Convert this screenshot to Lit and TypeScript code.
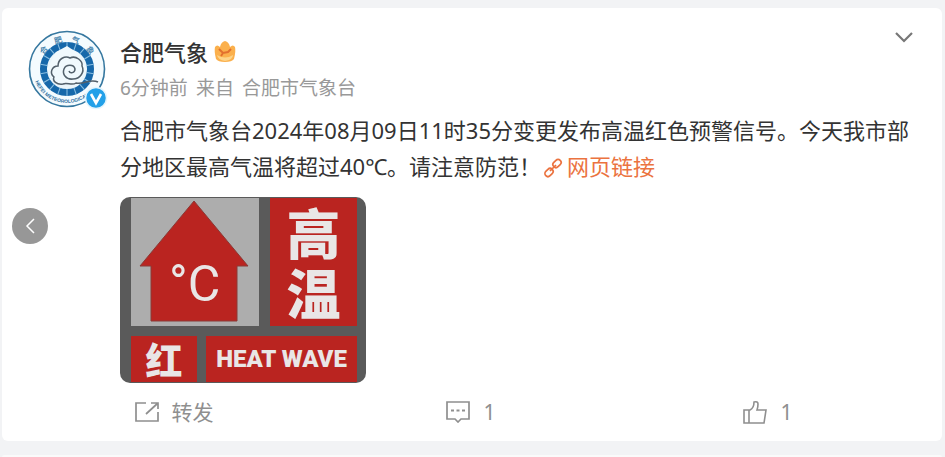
import { LitElement, html, css, svg } from "lit";
import { customElement } from "lit/decorators.js";

const tick = (i: number) => svg`<line x1="39" y1="12" x2="39" y2="19" transform="rotate(${i * 20} 39 39)" />`;

@customElement("warning-sign")
class WarningSign extends LitElement {
  static styles = css`
    :host { display: block; }
    .sign {
      display: grid;
      gap: 10px;
      width: 226px;
      padding: 1px 9px 1px 11px;
      border-radius: 10px;
      overflow: hidden;
      background: #5a5a5a;
      color: #e9e6e6;
      font-family: "Noto Sans CJK SC", sans-serif;
      font-weight: 900;
    }
    .row { display: grid; }
    .top { grid-template-columns: 128px minmax(0, 1fr); gap: 11px; height: 128px; }
    .bottom { grid-template-columns: 66px minmax(0, 1fr); gap: 9px; height: 46px; }
    .arrow { background: #adadad; }
    .arrow svg { display: block; }
    .unit { font-family: Roboto, sans-serif; font-size: 50px; font-weight: 400; fill: #e9e6e6; }
    .red { display: flex; align-items: center; justify-content: center; background: #ba2420; }
    .heat { flex-direction: column; font-size: 54px; line-height: 60px; }
    .level { font-size: 37px; line-height: 46px; }
    .english { font-family: Roboto, sans-serif; font-weight: 900; font-size: 24px; line-height: 46px; white-space: nowrap; }
  `;
  render() {
    return html`
      <div class="sign">
        <div class="row top">
          <div class="arrow">
            <svg width="128" height="128" viewBox="0 0 128 128">
              <path d="M63 3 L117 68 H106 V123 H20 V68 H9 Z" fill="#ba2420" stroke="#8a3a36" />
              <text class="unit" x="38" y="103">°C</text>
            </svg>
          </div>
          <div class="red heat"><span>高</span><span>温</span></div>
        </div>
        <div class="row bottom">
          <div class="red level">红</div>
          <div class="red english">HEAT WAVE</div>
        </div>
      </div>
    `;
  }
}

@customElement("app-root")
class AppRoot extends LitElement {
  static styles = css`
    :host {
      display: flex;
      flex-direction: column;
      gap: 14px;
      box-sizing: border-box;
      min-height: 100vh;
      padding: 8px 3px 0 2px;
      background: #f2f3f5;
      color: #333;
      font-family: "Noto Sans", "Noto Sans CJK SC", sans-serif;
    }
    .card { position: relative; padding: 22px 26px 10px 23px; border-radius: 6px; background: #fff; }
    .next { flex: 1; min-height: 2px; border-radius: 6px 6px 0 0; background: #fafafa; }
    .post { display: grid; grid-template-columns: 80px minmax(0, 1fr); column-gap: 12px; padding-left: 3px; }
    .avatar { display: block; }
    .avatar svg { display: block; }
    .head { display: flex; justify-content: space-between; align-items: flex-start; }
    .name { display: flex; align-items: center; gap: 6px; margin: 7px 0 6px; font-size: 22px; line-height: 30px; font-weight: 500; }
    .name a { color: #333; text-decoration: none; }
    .meta { display: flex; gap: 8px; margin: 0; font-size: 19px; line-height: 30px; color: #999; }
    .body { margin: 9px 0 0; font-size: 22px; line-height: 36px; }
    .link { color: #eb7340; text-decoration: none; }
    .link svg { vertical-align: -3px; margin: 0 4px 0 2px; }
    warning-sign { margin-top: 13px; }
    button { padding: 0; border: 0; background: none; color: inherit; font: inherit; cursor: pointer; }
    .more { display: flex; padding: 1px 2px; }
    .actions { display: grid; grid-template-columns: repeat(3, 1fr); margin-top: 10px; color: #8f8f8f; font-size: 21px; line-height: 38px; }
    .actions button { display: flex; align-items: center; justify-content: center; gap: 12px; }
    .prev {
      position: absolute;
      left: 10px;
      top: 200px;
      display: flex;
      align-items: center;
      justify-content: center;
      width: 36px;
      height: 36px;
      border-radius: 50%;
      background: #979797;
    }
    .ring { font: 700 8px "Noto Sans CJK SC", sans-serif; fill: #4a86ae; text-anchor: middle; }
    .latin { font: 700 5px "Liberation Sans", sans-serif; fill: #2d6f9f; text-anchor: middle; }
  `;

  avatar() {
    return html`
      <svg width="80" height="80" viewBox="0 0 80 80" role="img" aria-label="合肥气象">
        <circle cx="39" cy="39" r="37.5" fill="#f4fbfe" stroke="#35779f" stroke-width="1.6" />
        <circle cx="39" cy="39" r="23.5" fill="#e9f5fb" stroke="#1668aa" stroke-width="7" />
        <g stroke="#8cc0e2" stroke-width="1">${Array.from({ length: 18 }, (_, i) => tick(i))}</g>
        <path d="M39 16 L51 24 L59 39 L51 53 H27 L19 39 L28 22 Z" fill="#f0f9fd" />
        <path d="M70 52 C62 48 56 55 48 53 C44 56 39 52 35 54 C29 55 24 51 26 47 C21 43 24 36 30 36 C30 29 37 25 42 28 C48 25 55 31 54 36 C57 42 52 49 45 49 C38 50 34 44 36 39 C38 34 46 34 47 39 C47 43 42 44 41 41" fill="none" stroke="#52606b" stroke-width="1.5" />
        ${["合", "肥", "气", "象"].map((c, i) => svg`<text class="ring" x="39" y="12" transform="rotate(${-51 + i * 34} 39 39)">${c}</text>`)}
        <path id="arc" d="M5 39 A34 34 0 0 0 73 39" fill="none" />
        <text class="latin"><textPath href="#arc" startOffset="42%">HEFEI METEOROLOGICAL</textPath></text>
        <circle cx="68" cy="68" r="10.5" fill="#23a0e8" stroke="#e4f5fd" stroke-width="1.5" />
        <path d="M63 64 L68 73 L73 64" fill="none" stroke="#fff" stroke-width="2.6" />
      </svg>
    `;
  }

  render() {
    return html`
      <article class="card">
        <div class="post">
          <a class="avatar" href="#">${this.avatar()}</a>
          <div>
            <div class="head">
              <div>
                <div class="name">
                  <a href="#">合肥气象</a>
                  <svg width="22" height="24" viewBox="0 0 22 24" aria-hidden="true">
                    <path d="M1 7 Q3 4 6 7 Q7 2 11 1 Q15 2 16 7 Q19 4 21 7 Q22 11 20 19 Q18 22 11 22 Q4 22 2 19 Q0 11 1 7 Z" fill="#fbb04c" />
                    <path d="M3 15 Q11 20 19 15 Q19 20 11 21 Q4 20 3 15 Z" fill="#fdd489" />
                    <path d="M5 9 L9 13 L14 12 L17 9 M9 13 L7 16" fill="none" stroke="#e2702e" stroke-width="2" />
                  </svg>
                </div>
                <p class="meta"><span>6分钟前</span><span>来自</span><span>合肥市气象台</span></p>
              </div>
              <button class="more" aria-label="更多">
                <svg width="20" height="12" viewBox="0 0 20 12" fill="none" stroke="#777" stroke-width="2.2"><path d="M2 2 L10 10 L18 2" /></svg>
              </button>
            </div>
            <p class="body">合肥市气象台2024年08月09日11时35分变更发布高温红色预警信号。今天我市部分地区最高气温将超过40℃。请注意防范！<a class="link" href="#"><svg width="20" height="20" viewBox="0 0 20 20" fill="none" stroke="#eb7340" stroke-width="1.7"><rect x="11" y="1" width="6" height="9" rx="3" transform="rotate(45 14 5.5)" /><rect x="3" y="10" width="6" height="9" rx="3" transform="rotate(45 6 14.5)" /><path d="M7 13 L13 7" /></svg>网页链接</a></p>
            <warning-sign></warning-sign>
          </div>
        </div>
        <div class="actions">
          <button>
            <svg width="26" height="22" viewBox="0 0 26 22" fill="none" stroke="#8f8f8f" stroke-width="1.7"><path d="M12 2 H2 V20 H24 V11 M12 13 L24 2 M17 2 H24 V8" /></svg>
            <span>转发</span>
          </button>
          <button aria-label="评论 1">
            <svg width="26" height="22" viewBox="0 0 26 22" fill="none" stroke="#8f8f8f" stroke-width="1.7"><path d="M2 1 H24 V18 H16 L13 21 L10 18 H2 Z" /><path d="M6 9.5 H9 M11.5 9.5 H14.5 M17 9.5 H20" stroke-width="2" /></svg>
            <span>1</span>
          </button>
          <button aria-label="赞 1">
            <svg width="26" height="24" viewBox="0 0 26 24" fill="none" stroke="#8f8f8f" stroke-width="1.6"><path d="M2 10 H8 Q12 8 12 2 Q16 1 16 4 Q16 7 15 10 H24 L22 23 H2 Z M7 10 V23" /></svg>
            <span>1</span>
          </button>
        </div>
        <button class="prev" aria-label="上一张">
          <svg width="10" height="16" viewBox="0 0 10 16" fill="none" stroke="#fff" stroke-width="1.5"><path d="M9 1 L2 8 L9 15" /></svg>
        </button>
      </article>
      <section class="next"></section>
    `;
  }
}
